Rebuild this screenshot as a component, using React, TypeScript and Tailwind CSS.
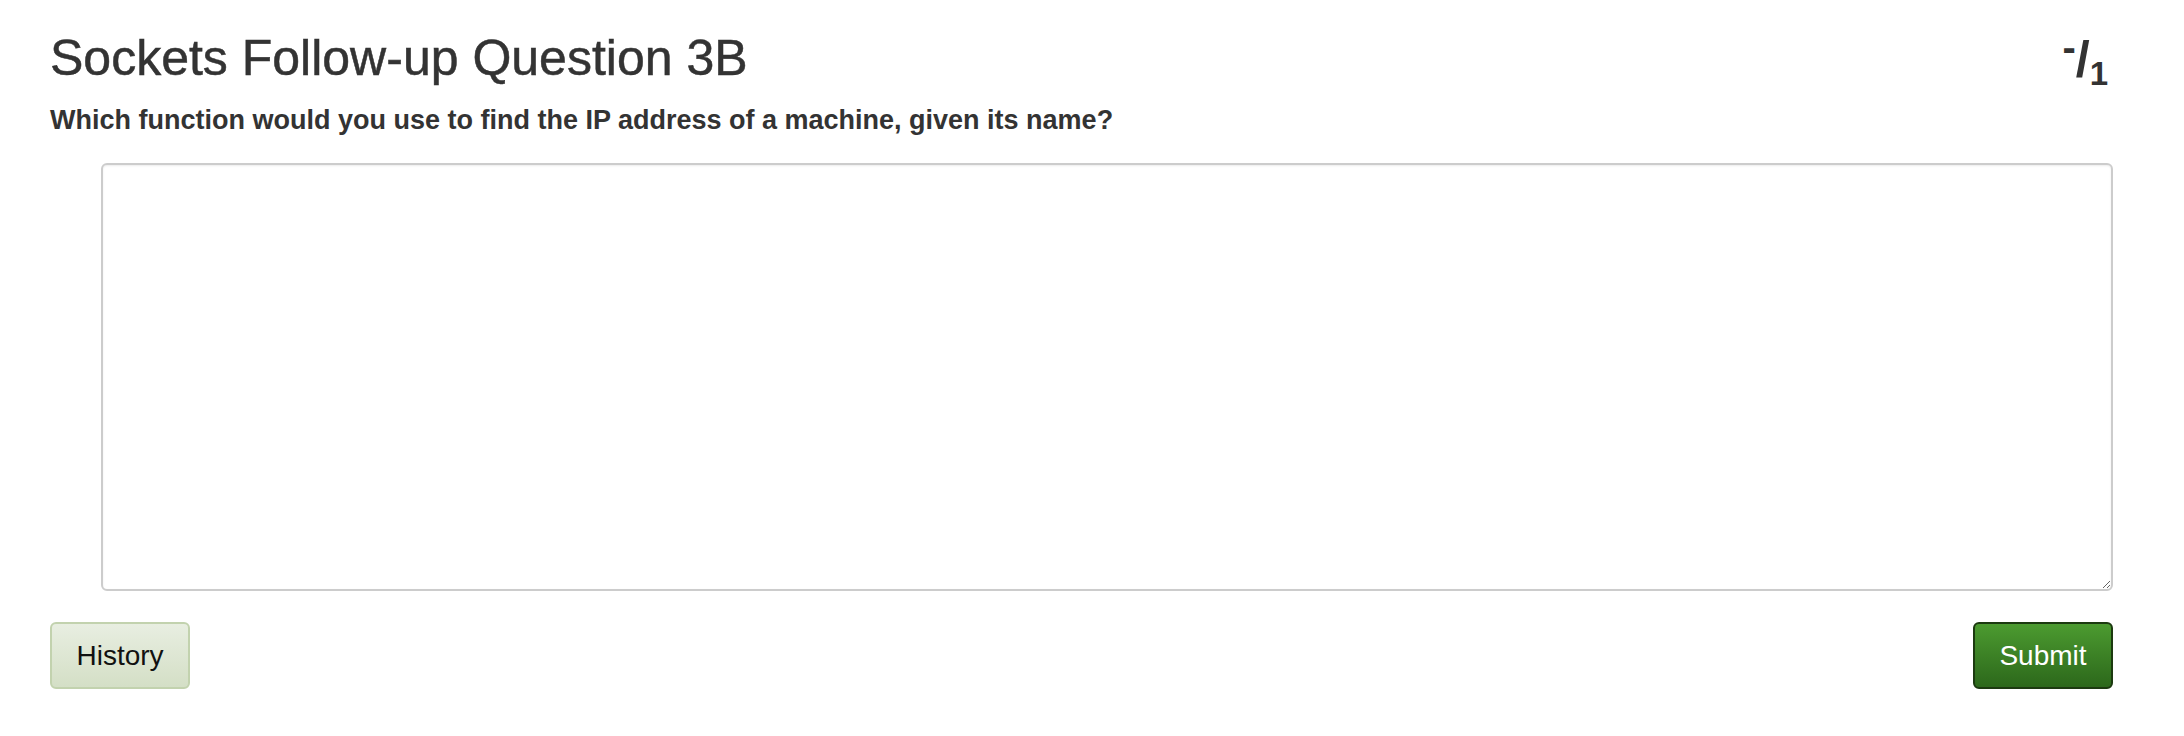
import { JSX } from "react";

/* ---------------- SCORE ---------------- */

function Score(): JSX.Element {
  return (
    <div className="mr-[5px] flex items-start font-bold text-[#333333]">
      <span className="-mt-[3px] text-[40px] leading-none">-</span>
      <span className="mt-[4px] text-[50px] leading-none">/</span>
      <span className="mt-[27px] text-[33px] leading-none">1</span>
    </div>
  );
}

/* ---------------- PAGE ---------------- */

export default function App(): JSX.Element {
  return (
    <div
      className="min-h-screen bg-white pt-[30px] pl-[50px] pr-[71px] text-[#333333]"
      style={{ fontFamily: '"Liberation Sans", Arial, Helvetica, sans-serif' }}
    >
      {/* HEADER */}
      <div className="flex items-start justify-between">
        <h2 className="mt-[1px] text-[50px] leading-[54px] font-normal [-webkit-text-stroke:0.5px_#333333]">
          Sockets Follow-up Question 3B
        </h2>
        <Score />
      </div>

      <p className="mt-[12px] text-[27px] leading-[36px] font-bold">
        Which function would you use to find the IP address of a machine, given its name?
      </p>

      {/* ANSWER */}
      <div className="mt-[25px] pl-[51px]">
        <textarea
          className="block h-[428px] w-full rounded-[6px] border-2 border-[#cccccc] bg-white p-3 text-[26px] shadow-[inset_0_1px_2px_rgba(0,0,0,0.08)] outline-none"
          style={{ fontFamily: '"Liberation Sans", Arial, sans-serif' }}
        />
      </div>

      {/* ACTIONS */}
      <div className="mt-[31px] flex items-center justify-between">
        <button className="flex h-[67px] w-[140px] items-center justify-center rounded-[6px] border-2 border-[#c2d2ae] bg-linear-to-b from-[#e8eee1] to-[#d4dfc6] text-[28px] text-[#111111]">
          History
        </button>
        <button className="flex h-[67px] w-[140px] items-center justify-center rounded-[6px] border-2 border-[#1c3a10] bg-linear-to-b from-[#4c9b30] to-[#2c681b] text-[28px] text-white">
          Submit
        </button>
      </div>
    </div>
  );
}
